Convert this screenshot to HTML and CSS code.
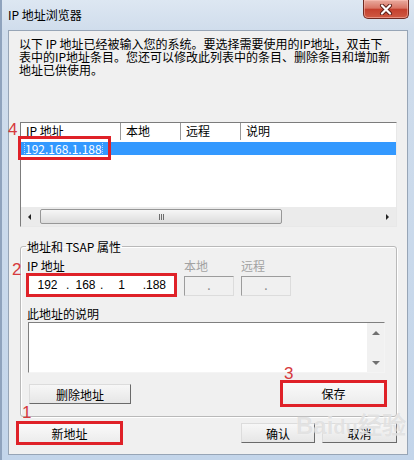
FILE: index.html
```html
<!DOCTYPE html>
<html lang="zh-CN">
<head>
    <meta charset="UTF-8">
    <title>IP 地址浏览器</title>
    <link rel="stylesheet" href="styles.css">
</head>
<body>
    <div class="window">
        <div class="titlebar">
            <span class="title">IP 地址浏览器</span>
            <span class="close">
                <svg width="14" height="11" viewBox="0 0 14 11">
                    <path d="M3 1.5 L11 9.5 M11 1.5 L3 9.5" stroke="#5a1d16" stroke-width="4" stroke-linecap="round"/>
                    <path d="M3 1.5 L11 9.5 M11 1.5 L3 9.5" stroke="#ffffff" stroke-width="2.2" stroke-linecap="round"/>
                </svg>
            </span>
        </div>

        <div class="client">
            <p class="intro">以下 IP 地址已经被输入您的系统。要选择需要使用的IP地址，双击下<br>表中的IP地址条目。您还可以修改此列表中的条目、删除条目和增加新<br>地址已供使用。</p>

            <div class="list">
                <div class="list-head">
                    <span class="col col-ip">IP 地址</span>
                    <span class="col col-short">本地</span>
                    <span class="col col-short">远程</span>
                    <span class="col col-rest">说明</span>
                </div>
                <div class="list-body">
                    <div class="row selected"><span class="cell-ip">192.168.1.188</span></div>
                </div>
                <div class="hscroll">
                    <span class="sb-btn"><span class="tri tri-left"></span></span>
                    <span class="thumb"><span class="grip"></span></span>
                    <span class="sb-track"></span>
                    <span class="sb-btn"><span class="tri tri-right"></span></span>
                </div>
                <span class="mark-box list-mark"></span>
                <span class="num num-4">4</span>
            </div>

            <fieldset class="group">
                <legend>地址和 TSAP 属性</legend>
                <div class="addr-row">
                    <div class="addr-col">
                        <span class="num num-2">2</span>
                        <label>IP 地址</label>
                        <span class="annot annot-ip">
                            <span class="ip-field">
                                <span class="oct o1">192</span><span class="dot d1">.</span>
                                <span class="oct o2">168</span><span class="dot d2">.</span>
                                <span class="oct o3">1</span><span class="dot d3">.</span>
                                <span class="oct o4">188</span>
                            </span>
                        </span>
                    </div>
                    <div class="addr-col port-col">
                        <label class="disabled">本地</label>
                        <span class="port-field">.</span>
                    </div>
                    <div class="addr-col port-col">
                        <label class="disabled">远程</label>
                        <span class="port-field">.</span>
                    </div>
                </div>

                <label class="desc-label">此地址的说明</label>
                <div class="desc-box">
                    <div class="desc-text"></div>
                    <div class="vscroll">
                        <span class="tri tri-up"></span>
                        <span class="tri tri-down"></span>
                    </div>
                </div>

                <div class="group-buttons">
                    <button class="btn btn-delete">删除地址</button>
                    <span class="annot annot-save">
                        <span class="num num-3">3</span>
                        <button class="btn btn-inner btn-save">保存</button>
                    </span>
                </div>
            </fieldset>

            <div class="dialog-buttons">
                <span class="annot annot-new">
                    <span class="num num-1">1</span>
                    <button class="btn btn-inner btn-new">新地址</button>
                </span>
                <button class="btn btn-ok">确认</button>
                <button class="btn btn-cancel">取消</button>
            </div>
        </div>

        <span class="watermark">Bai<span class="wm-du">du</span>经验</span>
    </div>
</body>
</html>
```

FILE: styles.css
```css
body { margin: 0; width: 414px; height: 460px; overflow: hidden; font: 12px/13px "Noto Sans CJK SC", "Liberation Sans", sans-serif; color: #000; background: #c6d7ec; }

.window { position: relative; height: 460px; padding: 0 6px 0 8px; box-sizing: border-box; background: linear-gradient(to bottom, #dde7f2 0, #d0ddec 30px, #c3d5ea 100%); box-shadow: inset 2px 0 #8fa3bd; }

.titlebar { height: 30px; display: flex; justify-content: space-between; align-items: flex-start; }
.title { margin-top: 8px; }
.close { width: 46px; height: 19px; margin-right: -1px; box-sizing: border-box; display: flex; align-items: center; justify-content: center; border: 1px solid #6f2a22; border-top: none; border-radius: 0 0 5px 5px; background: linear-gradient(to bottom, #e9ab9f 0, #d97565 45%, #c4402e 52%, #cf5a43 100%); box-shadow: inset 0 0 0 1px rgba(255, 200, 190, 0.5); }

.client { height: 425px; box-sizing: border-box; border: 1px solid #97a5b6; background: #f0f0f0; display: flex; flex-direction: column; }

.intro { margin: 6px 0 0 10px; }

/* list view */
.list { position: relative; margin: 46px 10px 0 11px; height: 105px; box-sizing: border-box; display: flex; flex-direction: column; background: #fff; border: 1px solid; border-color: #7c7c7c #e8e8e8 #e8e8e8 #7c7c7c; }
.list-head { height: 17px; display: flex; flex: none; }
.col { box-sizing: border-box; padding-left: 5px; line-height: 15px; border-right: 1px solid #9a9a9a; }
.col-ip { width: 100px; }
.col-short { width: 60px; }
.col-rest { flex: 1; border-right: none; }
.list-body { flex: 1; padding-top: 2px; }
.row { height: 13px; line-height: 13px; padding-left: 4px; }
.row.selected { background: #3399ff; color: #fff; }
.cell-ip { outline: 1px dotted rgba(255, 255, 255, 0.6); }

.hscroll { height: 19px; flex: none; display: flex; align-items: center; background: #ebebeb; }
.sb-btn { width: 17px; height: 19px; display: flex; align-items: center; justify-content: center; }
.thumb { width: 242px; height: 15px; box-sizing: border-box; margin-left: 2px; display: flex; align-items: center; justify-content: center; border: 1px solid #979797; border-radius: 2px; background: linear-gradient(to bottom, #f6f6f6, #dcdcdc); }
.grip { width: 5px; height: 6px; background: repeating-linear-gradient(to right, #6d6d6d 0 1px, transparent 1px 2px); }
.sb-track { flex: 1; }

.tri { width: 0; height: 0; border-style: solid; border-color: transparent; }
.tri-left { border-width: 3px 3px 3px 0; border-right-color: #222; }
.tri-right { border-width: 3px 0 3px 3px; border-left-color: #222; }
.tri-up { border-width: 0 4px 4px; border-bottom-color: #707070; }
.tri-down { border-width: 4px 4px 0; border-top-color: #707070; }

/* red annotations */
.mark-box { position: absolute; box-sizing: border-box; border: 3px solid #df2128; }
.list-mark { left: -3px; top: 13px; width: 93px; height: 24px; }
.num { position: absolute; font: 17px/17px "Liberation Sans", sans-serif; color: #d6393d; }
.num-4 { left: -13px; top: -2px; }
.num-2 { left: -15px; top: 2px; }
.num-3 { left: 1px; top: -18px; }
.num-1 { left: 3px; top: -20px; }
.annot { position: relative; display: flex; border: 3px solid #df2128; }

/* group box */
.group { margin: 13px 10px 0 11px; padding: 6px 6px 9px; border: 1px solid #b9b9b9; border-radius: 3px; box-shadow: inset 1px 1px #fff, 1px 1px #fff; }
.group legend { padding: 0 1px; margin-left: -1px; }
.addr-row { display: flex; }
.addr-col { position: relative; display: flex; flex-direction: column; align-items: flex-start; }
.addr-col label { line-height: 13px; }
.annot-ip { margin: 1px 0 0 -1px; }
.ip-field { width: 145px; height: 18px; display: flex; align-items: center; background: #fff; font-family: "Liberation Sans", sans-serif; }
.oct { text-align: center; }
.o1 { width: 37px; }
.o2 { width: 29px; }
.o3 { width: 27px; }
.o4 { width: 20px; }
.d1 { width: 5px; }
.d2 { width: 8px; }
.d3 { width: 11px; text-align: right; }
.port-col { margin-left: 7px; }
.port-col label { color: #a2a2a2; }
.disabled { color: #a2a2a2; }
.port-field { width: 50px; height: 20px; margin-top: 4px; box-sizing: border-box; border: 1px solid; border-color: #9c9c9c #dcdcdc #dcdcdc #9c9c9c; background: #f0f0f0; color: #888; text-align: center; line-height: 16px; }

.desc-label { display: block; margin-top: 10px; }
.desc-box { width: 357px; height: 51px; margin: 2px 0 0 1px; box-sizing: border-box; display: flex; background: #fff; border: 1px solid; border-color: #7f7f7f #f4f4f4 #f4f4f4 #7f7f7f; }
.desc-text { flex: 1; }
.vscroll { width: 17px; display: flex; flex-direction: column; align-items: center; justify-content: space-between; padding: 8px 0 7px; background: #f1f1f1; }

.group-buttons { display: flex; align-items: flex-start; margin-top: 7px; }

.btn { font: 12px/13px "Noto Sans CJK SC", "Liberation Sans", sans-serif; color: #000; padding: 0; box-sizing: border-box; background: linear-gradient(to bottom, #f7f7f7, #e6e6e6); border: 1px solid; border-color: #dcdcdc #6a6a6a #6a6a6a #dcdcdc; }
.btn-delete { width: 102px; height: 20px; margin: 4px 0 0 2px; }
.annot-save { margin: 0 3px 0 auto; }
.btn-inner { width: 101px; height: 21px; border: none; background: linear-gradient(to bottom, #fafafa, #ececec); }
.btn-new { height: 18px; }

.dialog-buttons { display: flex; align-items: flex-start; margin-top: 4px; }
.annot-new { margin-left: 7px; }
.btn-ok { width: 74px; height: 20px; margin: 2px 0 0 auto; }
.btn-cancel { width: 75px; height: 20px; margin: 2px 10px 0 7px; }

.watermark { position: absolute; left: 296px; top: 414px; font: bold 24px/24px "Liberation Sans", sans-serif; color: rgba(205, 205, 205, 0.55); text-shadow: 0 0 1px rgba(255, 255, 255, 0.8); pointer-events: none; }
.wm-du { font-size: 20px; }
```
